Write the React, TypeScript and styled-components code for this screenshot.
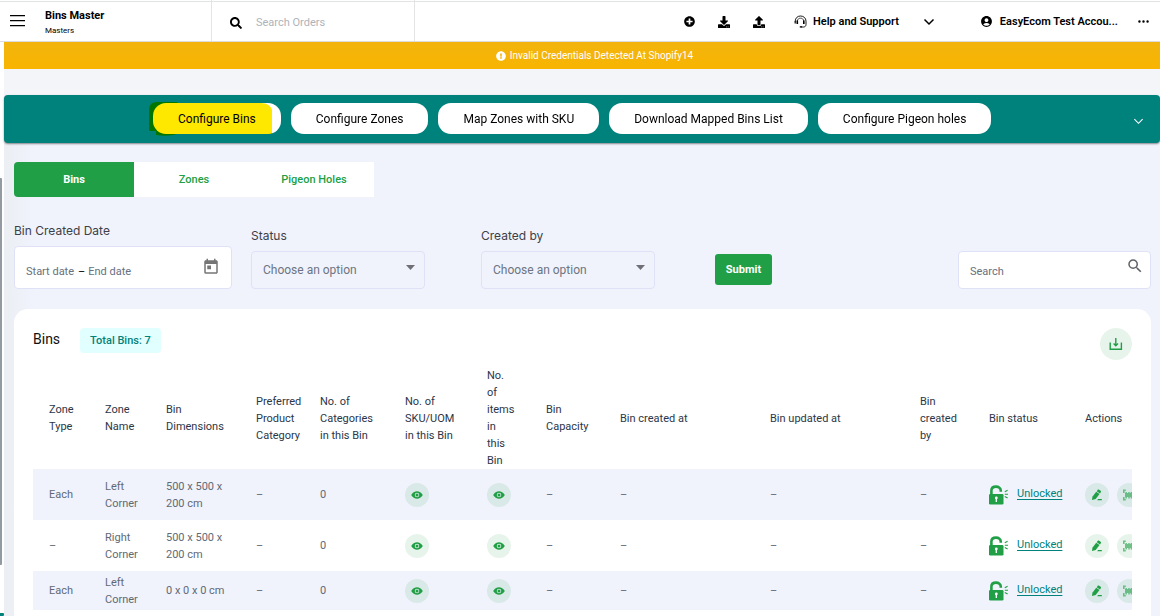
import React from "react";
import styled, { createGlobalStyle, css } from "styled-components";
import { FaSearch, FaDownload, FaUpload, FaPlusCircle, FaExclamationCircle } from "react-icons/fa";
import { MdAccountCircle, MdSearch, MdToday } from "react-icons/md";
import { IoEye } from "react-icons/io5";
import { BsThreeDots } from "react-icons/bs";

const color = {
  green: "#219f46",
  teal: "#00827c",
  page: "#f0f3fc",
  line: "#dfe2f7",
  heading: "#2b3648",
  body: "#626975",
  tint: "rgba(33, 159, 70, 0.11)",
};

const GlobalStyle = createGlobalStyle`
  * { box-sizing: border-box; }
  body { margin: 0; background: #fff; font-family: Roboto, "Liberation Sans", sans-serif; font-size: 11px; color: #000; }
  button, input, select { font-family: inherit; font-size: inherit; margin: 0; }
  svg { display: block; flex: none; }
`;

const Page = styled.div`
  min-height: 100vh;
  display: flex;
  flex-direction: column;
`;

const Header = styled.header`
  height: 42px;
  flex: none;
  display: flex;
  align-items: stretch;
  border-bottom: 1px solid #dcdcdc;
  box-shadow: inset 0 1px 0 #fff, inset 0 2px 0 #e2e4e4;
`;

const IconButton = styled.button`
  display: flex;
  align-items: center;
  justify-content: center;
  padding: 0;
  border: 0;
  background: none;
  color: #000;
`;

const Brand = styled.div`
  width: 212px;
  display: flex;
  align-items: center;
  gap: 19px;
  padding-left: 9px;
  border-right: 1px solid #e4e4e4;
`;

const BrandText = styled.div`
  padding-top: 4px;
`;

const Title = styled.h1`
  margin: 0;
  font-size: 11px;
  line-height: 14px;
  font-weight: 700;
`;

const Subtitle = styled.p`
  margin: 2px 0 0;
  font-size: 8px;
  line-height: 12px;
`;

const OrderSearch = styled.label`
  width: 203px;
  display: flex;
  align-items: center;
  gap: 14px;
  padding: 4px 10px 0 18px;
  border-right: 1px solid #e4e4e4;
`;

const BareInput = styled.input<{ $width?: string; $tone?: string }>`
  width: ${(p) => p.$width ?? "100%"};
  min-width: 0;
  padding: 0;
  border: 0;
  outline: 0;
  background: none;
  color: #000;
  &::placeholder {
    color: ${(p) => p.$tone ?? "#667080"};
    opacity: 1;
  }
`;

const Tools = styled.nav`
  margin-left: auto;
  display: flex;
  align-items: center;
  padding: 2px 10px 0 0;
`;

const QuickActions = styled.div`
  display: flex;
  gap: 23px;
  margin-right: 29px;
`;

const TextButton = styled(IconButton)<{ $gap: number }>`
  gap: ${(p) => p.$gap}px;
  font-weight: 600;
  white-space: nowrap;
`;

const HelpChevron = styled.span`
  margin-left: 18px;
`;

const AccountButton = styled(TextButton)`
  margin: 0 19px 0 45px;
`;

const Body = styled.div`
  flex: 1;
  display: flex;
`;

const Rail = styled.div`
  width: 4px;
  flex: none;
  display: flex;
  flex-direction: column;
`;

const RailPart = styled.span<{ $grow: number; $color?: string; $width?: number }>`
  flex: ${(p) => p.$grow} 0 0;
  width: ${(p) => p.$width ?? 4}px;
  background: ${(p) => p.$color ?? "transparent"};
  border-radius: 0 1px 1px 0;
`;

const Main = styled.main`
  flex: 1;
  min-width: 0;
  display: flex;
  flex-direction: column;
  background: linear-gradient(to right, #ebeef2, ${color.page} 30px);
`;

const Alert = styled.div`
  height: 27px;
  display: flex;
  align-items: center;
  justify-content: center;
  gap: 4px;
  padding-left: 25px;
  background: linear-gradient(#f2b40e, #f8b400);
  color: #fff;
  font-size: 10px;
`;

const ActionStrip = styled.div`
  padding-top: 26px;
  background: #f4f5f8;
`;

const ActionBar = styled.div`
  height: 48px;
  display: flex;
  align-items: center;
  gap: 10px;
  padding: 0 16px 1px 149px;
  border-radius: 4px;
  background: ${color.teal};
  box-shadow: 0 1px 2px rgba(0, 0, 0, 0.45);
  isolation: isolate;
`;

const Pill = styled.button`
  height: 31px;
  padding: 0 25px;
  border: 0;
  border-radius: 13px;
  background: #fff;
  color: #000;
  font-size: 12px;
  white-space: nowrap;
`;

const Highlighted = styled.div`
  position: relative;
  display: flex;
`;

const Marker = styled.svg`
  position: absolute;
  left: -4px;
  top: -1px;
  mix-blend-mode: multiply;
  pointer-events: none;
`;

const Collapse = styled(IconButton)`
  margin-left: auto;
  padding-top: 6px;
  color: #fff;
`;

const Content = styled.div`
  flex: 1;
  display: flex;
  flex-direction: column;
  padding: 19px 9px 0 10px;
`;

const Tabs = styled.div`
  display: flex;
  width: 360px;
  border-radius: 4px 0 0 4px;
  overflow: hidden;
`;

const Tab = styled.button<{ $active?: boolean }>`
  flex: 1;
  height: 35px;
  padding: 0;
  border: 0;
  background: ${(p) => (p.$active ? color.green : "#fff")};
  color: ${(p) => (p.$active ? "#fff" : color.green)};
  font-weight: ${(p) => (p.$active ? 700 : 500)};
`;

const Filters = styled.form`
  display: flex;
  align-items: flex-end;
  margin: 27px 0 20px;
`;

const Field = styled.div<{ $width: number; $before?: number }>`
  width: ${(p) => p.$width}px;
  margin-left: ${(p) => p.$before ?? 0}px;
  display: flex;
  flex-direction: column;
  gap: 8px;
`;

const Label = styled.label`
  font-family: Inter, Roboto, sans-serif;
  font-size: 12px;
  line-height: 14px;
  font-weight: 400;
  color: #3d4048;
`;

const box = css`
  border: 1px solid ${color.line};
  border-radius: 4px;
`;

const DateBox = styled.div`
  ${box}
  height: 43px;
  display: flex;
  align-items: center;
  gap: 3px;
  padding: 8px 11px 0 11px;
  background: #fff;
`;

const DateToggle = styled(IconButton)`
  margin: 0 0 10px auto;
  color: #757575;
`;

const SelectBox = styled.div`
  position: relative;
`;

const Select = styled.select`
  ${box}
  width: 100%;
  height: 38px;
  padding: 0 30px 0 11px;
  appearance: none;
  background: transparent;
  color: #6d7582;
  font-size: 12px;
`;

const Caret = styled.svg`
  position: absolute;
  right: 10px;
  top: 14px;
  pointer-events: none;
`;

const Submit = styled.button`
  width: 57px;
  height: 31px;
  margin: 0 20px 4px 60px;
  padding: 0;
  border: 0;
  border-radius: 3px;
  background: ${color.green};
  color: #fff;
  font-weight: 700;
`;

const TableSearch = styled.label`
  ${box}
  width: 193px;
  height: 38px;
  margin-left: auto;
  display: flex;
  align-items: center;
  padding: 2px 6px 0 11px;
  background: #fff;
  color: #5f6368;
  svg {
    margin-bottom: 10px;
  }
`;

const Card = styled.section`
  flex: 1;
  padding: 19px 19px 0;
  border-radius: 14px 14px 0 0;
  background: #fff;
`;

const CardHead = styled.div`
  display: flex;
  align-items: flex-start;
  height: 39px;
`;

const CardTitle = styled.h2`
  margin: 0 20px 0 0;
  font-size: 14px;
  line-height: 23px;
  font-weight: 400;
  color: #111;
`;

const Count = styled.span`
  padding: 0 10px;
  border-radius: 4px;
  background: #e1fffe;
  color: ${color.teal};
  font-weight: 500;
  line-height: 25px;
`;

const Round = styled.button<{ $size: number }>`
  width: ${(p) => p.$size}px;
  height: ${(p) => p.$size}px;
  flex: none;
  display: flex;
  align-items: center;
  justify-content: center;
  padding: 0;
  border: 0;
  border-radius: 50%;
  background: ${color.tint};
  color: ${color.green};
`;

const Export = styled(Round)`
  margin-left: auto;
`;

const TableScroll = styled.div`
  overflow-x: auto;
  scrollbar-width: none;
`;

const Table = styled.table`
  width: 100%;
  min-width: 1120px;
  table-layout: fixed;
  border-collapse: collapse;
  line-height: 17px;
`;

const Th = styled.th`
  height: 102px;
  padding: 0 0 0 16px;
  text-align: left;
  vertical-align: middle;
  font-weight: 400;
  color: ${color.heading};
  white-space: pre;
`;

const Row = styled.tr<{ $height: number }>`
  height: ${(p) => p.$height}px;
  &:nth-child(odd) {
    background: ${color.page};
  }
`;

const Td = styled.td`
  padding: 0 0 0 16px;
  vertical-align: middle;
  color: ${color.body};
  white-space: pre;
`;

const Inline = styled.div`
  display: flex;
  align-items: center;
  gap: 8px;
`;

const StatusLink = styled.a`
  color: ${color.teal};
  text-decoration: underline;
  text-underline-offset: 2px;
  padding-bottom: 2px;
`;

const Chevron = ({ size, stroke }: { size: number; stroke: number }) => (
  <svg width={size} height={size} viewBox="0 0 12 12" fill="none" stroke="currentColor" strokeWidth={stroke}>
    <path d="M1.5 3.5 6 8l4.5-4.5" />
  </svg>
);

const MenuIcon = () => (
  <svg width="17" height="12" viewBox="0 0 17 12" stroke="currentColor" strokeWidth="1.3">
    <path d="M1 .7h15M1 5.6h15M1 10.6h15" />
  </svg>
);

const SupportIcon = () => (
  <svg width="13" height="13" viewBox="0 0 13 13" fill="none" stroke="currentColor">
    <path d="M1.2 6.5C1.2 3 3.5 1 6.5 1s5.5 2 5.5 5.2v3.3c0 1.5-1 2.5-2.5 2.5h-2" strokeWidth="0.9" />
    <path d="M3.3 6C3.5 4.2 4.8 3.2 6.5 3.2S9.6 4.2 9.8 6" strokeWidth="0.7" />
    <path d="M3.3 5.5v3.6M9.8 5.5v3.6" strokeWidth="1.6" />
    <path d="M1.2 6v2.5" strokeWidth="1.2" />
    <path d="M5.8 11.9H8" strokeWidth="1.4" />
  </svg>
);

const ExportIcon = () => (
  <svg width="14" height="14" viewBox="0 0 14 14" fill="none" stroke="currentColor" strokeWidth="1.4">
    <path d="M1.2 5.6v6.6h11.2V5.6" />
    <path d="M6.8 1v7.2M4.6 6.6l2.2 2.2L9 6.6" />
  </svg>
);

const LockIcon = () => (
  <svg width="20" height="20" viewBox="0 0 20 20" fill="none">
    <path d="M2.4 10V5.6C2.4 2.9 4.6 1.6 7 1.6c2.6 0 4.8 1.5 4.8 4.2v.9" stroke={color.green} strokeWidth="2.6" />
    <rect x="0" y="9" width="14.5" height="10.5" rx="1.3" fill={color.green} />
    <circle cx="7.3" cy="12.9" r="1.4" fill="#fff" />
    <path d="M7.3 13v4" stroke="#fff" strokeWidth="1.3" />
    <path d="M15.8 6.8l2.8-1.6M15.8 9.200h3.200M15.800 11.400l2.800 1.600" stroke={color.green} strokeWidth="1.1" />
  </svg>
);

const PencilIcon = () => (
  <svg width="12" height="12" viewBox="0 0 12 12" fill="currentColor">
    <path d="M1 11l.4-3.2L5.200 2.700l3.300 2.300-3.800 5z" />
    <path d="M5.700 2.200 6.600 1c.4-.5 1-.6 1.500-.2l1.500 1c.5.4.6 1 .2 1.500L9 4.500z" />
    <path d="M7 9.900h3.800v1.300H6.200z" />
  </svg>
);

const BarcodeIcon = () => (
  <svg width="13" height="12" viewBox="0 0 13 12" fill="none" stroke="currentColor" opacity="0.6">
    <path d="M.8 4V1.200h2M.8 8v2.800h2M12.200 4V1.200h-2M12.200 8v2.800h-2" strokeWidth="1.6" />
    <path d="M2 6h9" strokeWidth="4" />
    <path d="M3.2 3v6.500M6 3v6.500M8.400 3v6.500M10.500 3v6.500" strokeWidth="1.500" />
  </svg>
);

const OptionCaret = () => (
  <Caret width="9" height="5" viewBox="0 0 9 5" fill="#6f6f75">
    <path d="M0 0h9L4.5 5z" />
  </Caret>
);

const columns = [
  { label: "Zone\nType", width: 56 },
  { label: "Zone\nName", width: 61 },
  { label: "Bin\nDimensions", width: 90 },
  { label: "Preferred\nProduct\nCategory", width: 64 },
  { label: "No. of\nCategories\nin this Bin", width: 85 },
  { label: "No. of\nSKU/UOM\nin this Bin", width: 82 },
  { label: "No.\nof\nitems\nin\nthis\nBin", width: 59 },
  { label: "Bin\nCapacity", width: 74 },
  { label: "Bin created at", width: 150 },
  { label: "Bin updated at", width: 150 },
  { label: "Bin\ncreated\nby", width: 69 },
  { label: "Bin status", width: 96 },
  { label: "Actions", width: 84 },
];

const bins = [
  { type: "Each", name: "Left\nCorner", size: "500 x 500 x\n200 cm", height: 51 },
  { type: "–", name: "Right\nCorner", size: "500 x 500 x\n200 cm", height: 51 },
  { type: "Each", name: "Left\nCorner", size: "0 x 0 x 0 cm", height: 39 },
];

const actions = ["Configure Zones", "Map Zones with SKU", "Download Mapped Bins List", "Configure Pigeon holes"];

export default function App() {
  return (
    <Page>
      <GlobalStyle />
      <Header>
        <Brand>
          <IconButton aria-label="Menu"><MenuIcon /></IconButton>
          <BrandText>
            <Title>Bins Master</Title>
            <Subtitle>Masters</Subtitle>
          </BrandText>
        </Brand>
        <OrderSearch>
          <FaSearch size={12} />
          <BareInput type="text" aria-label="Search orders" placeholder="Search Orders" $tone="#aeb3bb" />
        </OrderSearch>
        <Tools>
          <QuickActions>
            <IconButton aria-label="Add"><FaPlusCircle size={11} /></IconButton>
            <IconButton aria-label="Download"><FaDownload size={12} /></IconButton>
            <IconButton aria-label="Upload"><FaUpload size={12} /></IconButton>
          </QuickActions>
          <TextButton $gap={6}>
            <SupportIcon />
            Help and Support
            <HelpChevron><Chevron size={12} stroke={1.5} /></HelpChevron>
          </TextButton>
          <AccountButton $gap={7}>
            <MdAccountCircle size={13} />
            EasyEcom Test Accou...
          </AccountButton>
          <IconButton aria-label="More"><BsThreeDots size={13} /></IconButton>
        </Tools>
      </Header>
      <Body>
        <Rail>
          <RailPart $grow={136} />
          <RailPart $grow={387} $color="#949aa2" $width={2} />
          <RailPart $grow={48} />
          <RailPart $grow={3} $color={color.teal} />
        </Rail>
        <Main>
          <Alert role="alert">
            <FaExclamationCircle size={10} />
            Invalid Credentials Detected At Shopify14
          </Alert>
          <ActionStrip>
            <ActionBar>
              <Highlighted>
                <Pill>Configure Bins</Pill>
                <Marker width="124" height="35" viewBox="0 0 124 35" fill="#ffe800">
                  <path d="M0 29V6C1 2 4 0 8 0h20v1h84c6 0 10 3 11 7v24H28c-6 2-14 2-21 1v-4z" />
                </Marker>
              </Highlighted>
              {actions.map((a) => <Pill key={a}>{a}</Pill>)}
              <Collapse aria-label="Collapse"><Chevron size={11} stroke={1.2} /></Collapse>
            </ActionBar>
          </ActionStrip>
          <Content>
            <Tabs role="tablist">
              <Tab role="tab" aria-selected $active>Bins</Tab>
              <Tab role="tab">Zones</Tab>
              <Tab role="tab">Pigeon Holes</Tab>
            </Tabs>
            <Filters>
              <Field $width={218}>
                <Label htmlFor="start">Bin Created Date</Label>
                <DateBox>
                  <BareInput id="start" type="text" placeholder="Start date" $width="49px" />
                  –
                  <BareInput type="text" aria-label="End date" placeholder="End date" $width="60px" />
                  <DateToggle type="button" aria-label="Open calendar"><MdToday size={18} /></DateToggle>
                </DateBox>
              </Field>
              <Field $width={174} $before={19}>
                <Label htmlFor="status">Status</Label>
                <SelectBox>
                  <Select id="status"><option>Choose an option</option></Select>
                  <OptionCaret />
                </SelectBox>
              </Field>
              <Field $width={174} $before={56}>
                <Label htmlFor="creator">Created by</Label>
                <SelectBox>
                  <Select id="creator"><option>Choose an option</option></Select>
                  <OptionCaret />
                </SelectBox>
              </Field>
              <Submit type="button">Submit</Submit>
              <TableSearch>
                <BareInput type="text" aria-label="Search bins" placeholder="Search" />
                <MdSearch size={18} />
              </TableSearch>
            </Filters>
            <Card>
              <CardHead>
                <CardTitle>Bins</CardTitle>
                <Count>Total Bins: 7</Count>
                <Export $size={32} aria-label="Export bins"><ExportIcon /></Export>
              </CardHead>
              <TableScroll>
                <Table>
                  <colgroup>
                    {columns.map((c) => <col key={c.label} width={c.width} />)}
                  </colgroup>
                  <thead>
                    <tr>{columns.map((c) => <Th key={c.label} scope="col">{c.label}</Th>)}</tr>
                  </thead>
                  <tbody>
                    {bins.map((b, i) => (
                      <Row key={i} $height={b.height}>
                        <Td>{b.type}</Td>
                        <Td>{b.name}</Td>
                        <Td>{b.size}</Td>
                        <Td>–</Td>
                        <Td>0</Td>
                        <Td><Round $size={24} aria-label="View SKUs"><IoEye size={12} /></Round></Td>
                        <Td><Round $size={24} aria-label="View items"><IoEye size={12} /></Round></Td>
                        <Td>–</Td>
                        <Td>–</Td>
                        <Td>–</Td>
                        <Td>–</Td>
                        <Td>
                          <Inline>
                            <LockIcon />
                            <StatusLink href="#unlocked">Unlocked</StatusLink>
                          </Inline>
                        </Td>
                        <Td>
                          <Inline>
                            <Round $size={24} aria-label="Edit bin"><PencilIcon /></Round>
                            <Round $size={24} aria-label="Print barcode"><BarcodeIcon /></Round>
                          </Inline>
                        </Td>
                      </Row>
                    ))}
                  </tbody>
                </Table>
              </TableScroll>
            </Card>
          </Content>
        </Main>
      </Body>
    </Page>
  );
}
